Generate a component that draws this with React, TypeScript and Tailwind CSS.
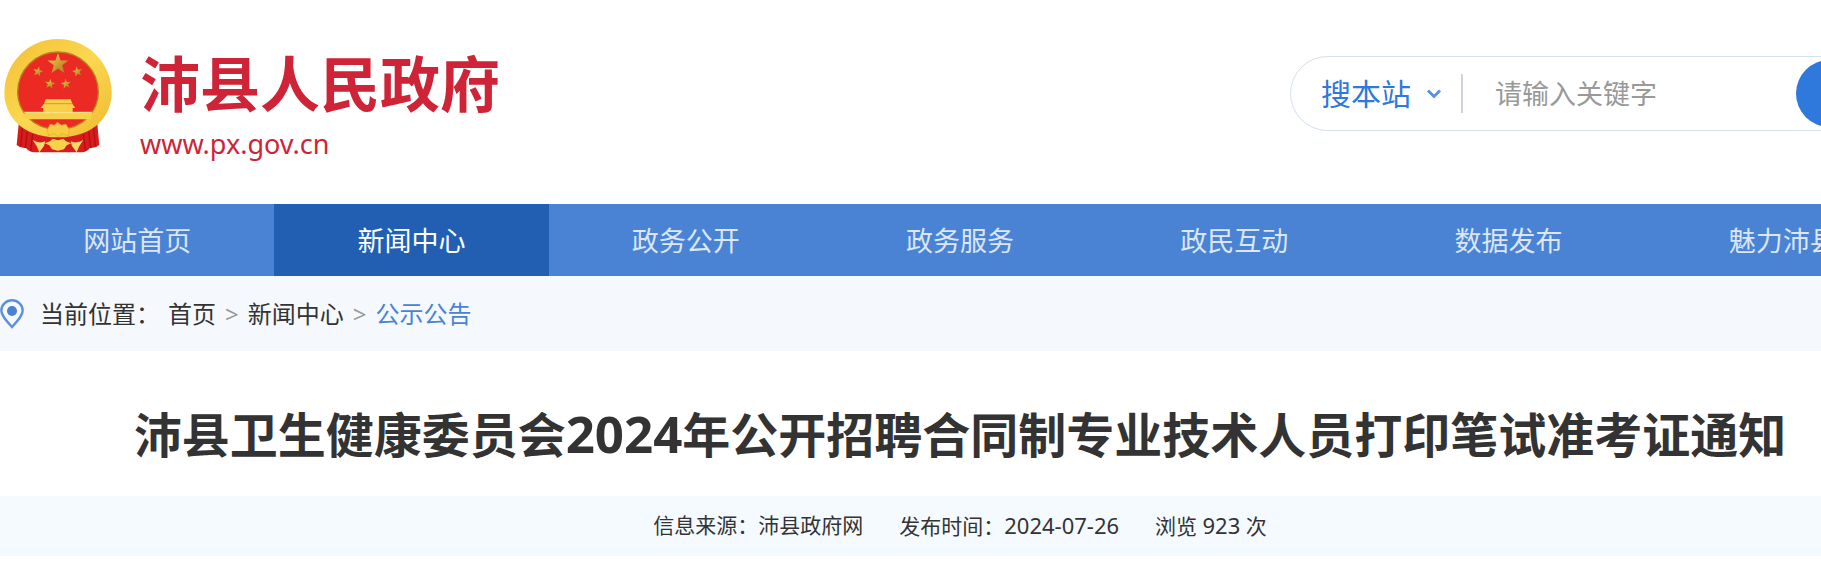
import React from "react";

const navItems = ["网站首页", "新闻中心", "政务公开", "政务服务", "政民互动", "数据发布", "魅力沛县"];

const starPath =
  "M0 -1 L0.235 -0.324 L0.951 -0.309 L0.38 0.124 L0.588 0.809 L0 0.4 L-0.588 0.809 L-0.38 0.124 L-0.951 -0.309 L-0.235 -0.324 Z";

const stars = [
  { x: 174, y: 102, r: 33, a: 0 },
  { x: 114, y: 125, r: 16, a: 12 },
  { x: 232, y: 125, r: 16, a: -12 },
  { x: 150, y: 162, r: 16, a: 8 },
  { x: 198, y: 162, r: 16, a: -8 },
];

function Emblem() {
  return (
    <svg viewBox="12 24 324 348" className="h-[116px] w-[108px] shrink-0" role="img" aria-label="国徽">
      <defs>
        <linearGradient id="gold" x1="0" y1="0" x2="1" y2="1">
          <stop offset="0" stopColor="#f3bf35" />
          <stop offset="0.5" stopColor="#fbd750" />
          <stop offset="1" stopColor="#efb931" />
        </linearGradient>
        <linearGradient id="star" x1="0" y1="0" x2="1" y2="1">
          <stop offset="0" stopColor="#f7cf52" />
          <stop offset="1" stopColor="#a8741c" />
        </linearGradient>
      </defs>
      <path d="M58 262 L50 345 Q62 356 78 354 Q86 366 104 367 L244 367 Q262 366 270 354 Q286 356 298 345 L290 262 Z" fill="#d81b1c" />
      <path d="M68 285 L62 348 M82 304 L76 354 M98 312 L92 362 M280 285 L286 348 M266 304 L272 354 M250 312 L256 362" stroke="#b01015" strokeWidth="4" />
      <path d="M13 188 A161 161 0 0 1 335 188 C335 250 290 322 174 322 C58 322 13 250 13 188 Z" fill="url(#gold)" />
      <path d="M53 187 A121 121 0 0 1 295 187 C295 240 252 298 174 298 C96 298 53 240 53 187 Z" fill="#ec2a24" stroke="#b9811d" strokeWidth="4" />
      {stars.map((s) => (
        <path key={s.x} d={starPath} fill="url(#star)" transform={`translate(${s.x} ${s.y}) rotate(${s.a}) scale(${s.r})`} />
      ))}
      <path d="M137 208 H212 L217 221 L226 234 H122 L132 221 Z" fill="#f9cf4b" />
      <path d="M132 221 H217" stroke="#d99a25" strokeWidth="3" />
      <path d="M130 234 H218 V245 H277 L272 268 H77 L72 245 H130 Z" fill="#f9cf4b" />
      <path d="M77 248 H272" stroke="#fde58a" strokeWidth="3" />
      <path d="M142 300 L150 283 L163 286 L172 277 L184 286 L198 283 L208 300 L204 318 L186 310 L174 320 L162 310 L146 318 Z" fill="#f7cc45" stroke="#e5ab2e" strokeWidth="2" />
      <path d="M98 330 Q118 342 136 334 L132 348 L118 367 Q110 345 98 330 Z" fill="#f9d86a" />
      <path d="M250 330 Q230 342 212 334 L216 348 L230 367 Q238 345 250 330 Z" fill="#f9d86a" />
      <path d="M134 340 L150 334 L158 326 L174 331 L190 326 L198 334 L214 340 L200 346 L192 358 L174 362 L156 358 L148 346 Z" fill="#f9d24c" />
    </svg>
  );
}

function PinIcon() {
  return (
    <svg viewBox="0 0 24 30" className="h-[30px] w-6 shrink-0" aria-hidden="true">
      <path d="M12 1.3 C6 1.3 1.3 6 1.3 11.5 C1.3 16 5 20.5 12 28 C19 20.5 22.7 16 22.7 11.5 C22.7 6 18 1.3 12 1.3 Z" fill="none" stroke="#5b90dc" strokeWidth="2.4" />
      <circle cx="12" cy="12" r="5" fill="#4a82d3" />
    </svg>
  );
}

export default function App() {
  return (
    <div className="overflow-hidden bg-white font-['Noto_Sans','Noto_Sans_CJK_SC',sans-serif] text-[#333333]">
      <div className="min-w-[1920px]">
        <header className="flex h-[204px] items-start justify-between pl-1">
          <a href="#home" className="flex items-start gap-7 pt-[38px] text-[#cf2437]">
            <Emblem />
            <span className="flex flex-col">
              <span className="text-[60px] leading-[92px] font-bold">沛县人民政府</span>
              <span className="text-[27px] leading-7">www.px.gov.cn</span>
            </span>
          </a>
          <form className="mt-14 flex h-[75px] w-[630px] items-center rounded-full border border-[#d5dfe9] pr-1 pl-[30px]">
            <button type="button" className="flex items-center gap-4 text-[30px] leading-10 text-[#2f78dc]">
              搜本站
              <svg viewBox="0 0 14 10" className="h-[10px] w-[14px]" aria-hidden="true">
                <path d="M1 1.5 L7 7.5 L13 1.5" fill="none" stroke="#5b90e0" strokeWidth="2.8" />
              </svg>
            </button>
            <span className="ml-5 h-[39px] w-0.5 bg-[#d0d3da]" />
            <input
              type="text"
              aria-label="请输入关键字"
              placeholder="请输入关键字"
              className="ml-8 min-w-0 flex-1 text-[27px] leading-10 outline-none placeholder:text-[#999999]"
            />
            <button type="submit" aria-label="搜索" className="flex h-[67px] w-[119px] items-center justify-center rounded-full bg-[#2f78dc] text-white">
              <svg viewBox="0 0 24 24" className="size-8" aria-hidden="true">
                <path d="M16 16 L22 22 M18 10 A8 8 0 1 1 2 10 A8 8 0 1 1 18 10" fill="none" stroke="currentColor" strokeWidth="2" />
              </svg>
            </button>
          </form>
        </header>

        <nav className="grid h-[72px] grid-cols-7 bg-[#4a83d4]">
          {navItems.map((item) => (
            <a
              key={item}
              href={`#${item}`}
              className={
                item === "新闻中心"
                  ? "flex items-center justify-center bg-[#225fb2] pt-0.5 text-[27px] text-white"
                  : "flex items-center justify-center pt-0.5 text-[27px] text-[#dbe6f6]"
              }
            >
              {item}
            </a>
          ))}
        </nav>

        <div className="flex h-[75px] items-center bg-[#f5f8fd] text-2xl">
          <PinIcon />
          <span className="ml-4">当前位置：</span>
          <a href="#home" className="ml-2">首页</a>
          <span className="mx-[9px] text-2xl text-[#999999]">&gt;</span>
          <a href="#news">新闻中心</a>
          <span className="mx-[9px] text-2xl text-[#999999]">&gt;</span>
          <a href="#notice" className="text-[#4a83d4]">公示公告</a>
        </div>

        <main>
          <h1 className="flex h-[145px] items-center justify-center pt-5 text-5xl font-bold">
            <span>
              沛县卫生健康委员会<span className="text-[51px]">2024</span>年公开招聘合同制专业技术人员打印笔试准考证通知
            </span>
          </h1>
          <div className="flex h-[60px] items-center justify-center gap-9 bg-[#f4faff] text-[21px]">
            <span>信息来源：沛县政府网</span>
            <span>
              发布时间：<span className="text-[22px]">2024-07-26</span>
            </span>
            <span>
              浏览 <span className="text-[22px]">923</span> 次
            </span>
          </div>
        </main>
      </div>
    </div>
  );
}
